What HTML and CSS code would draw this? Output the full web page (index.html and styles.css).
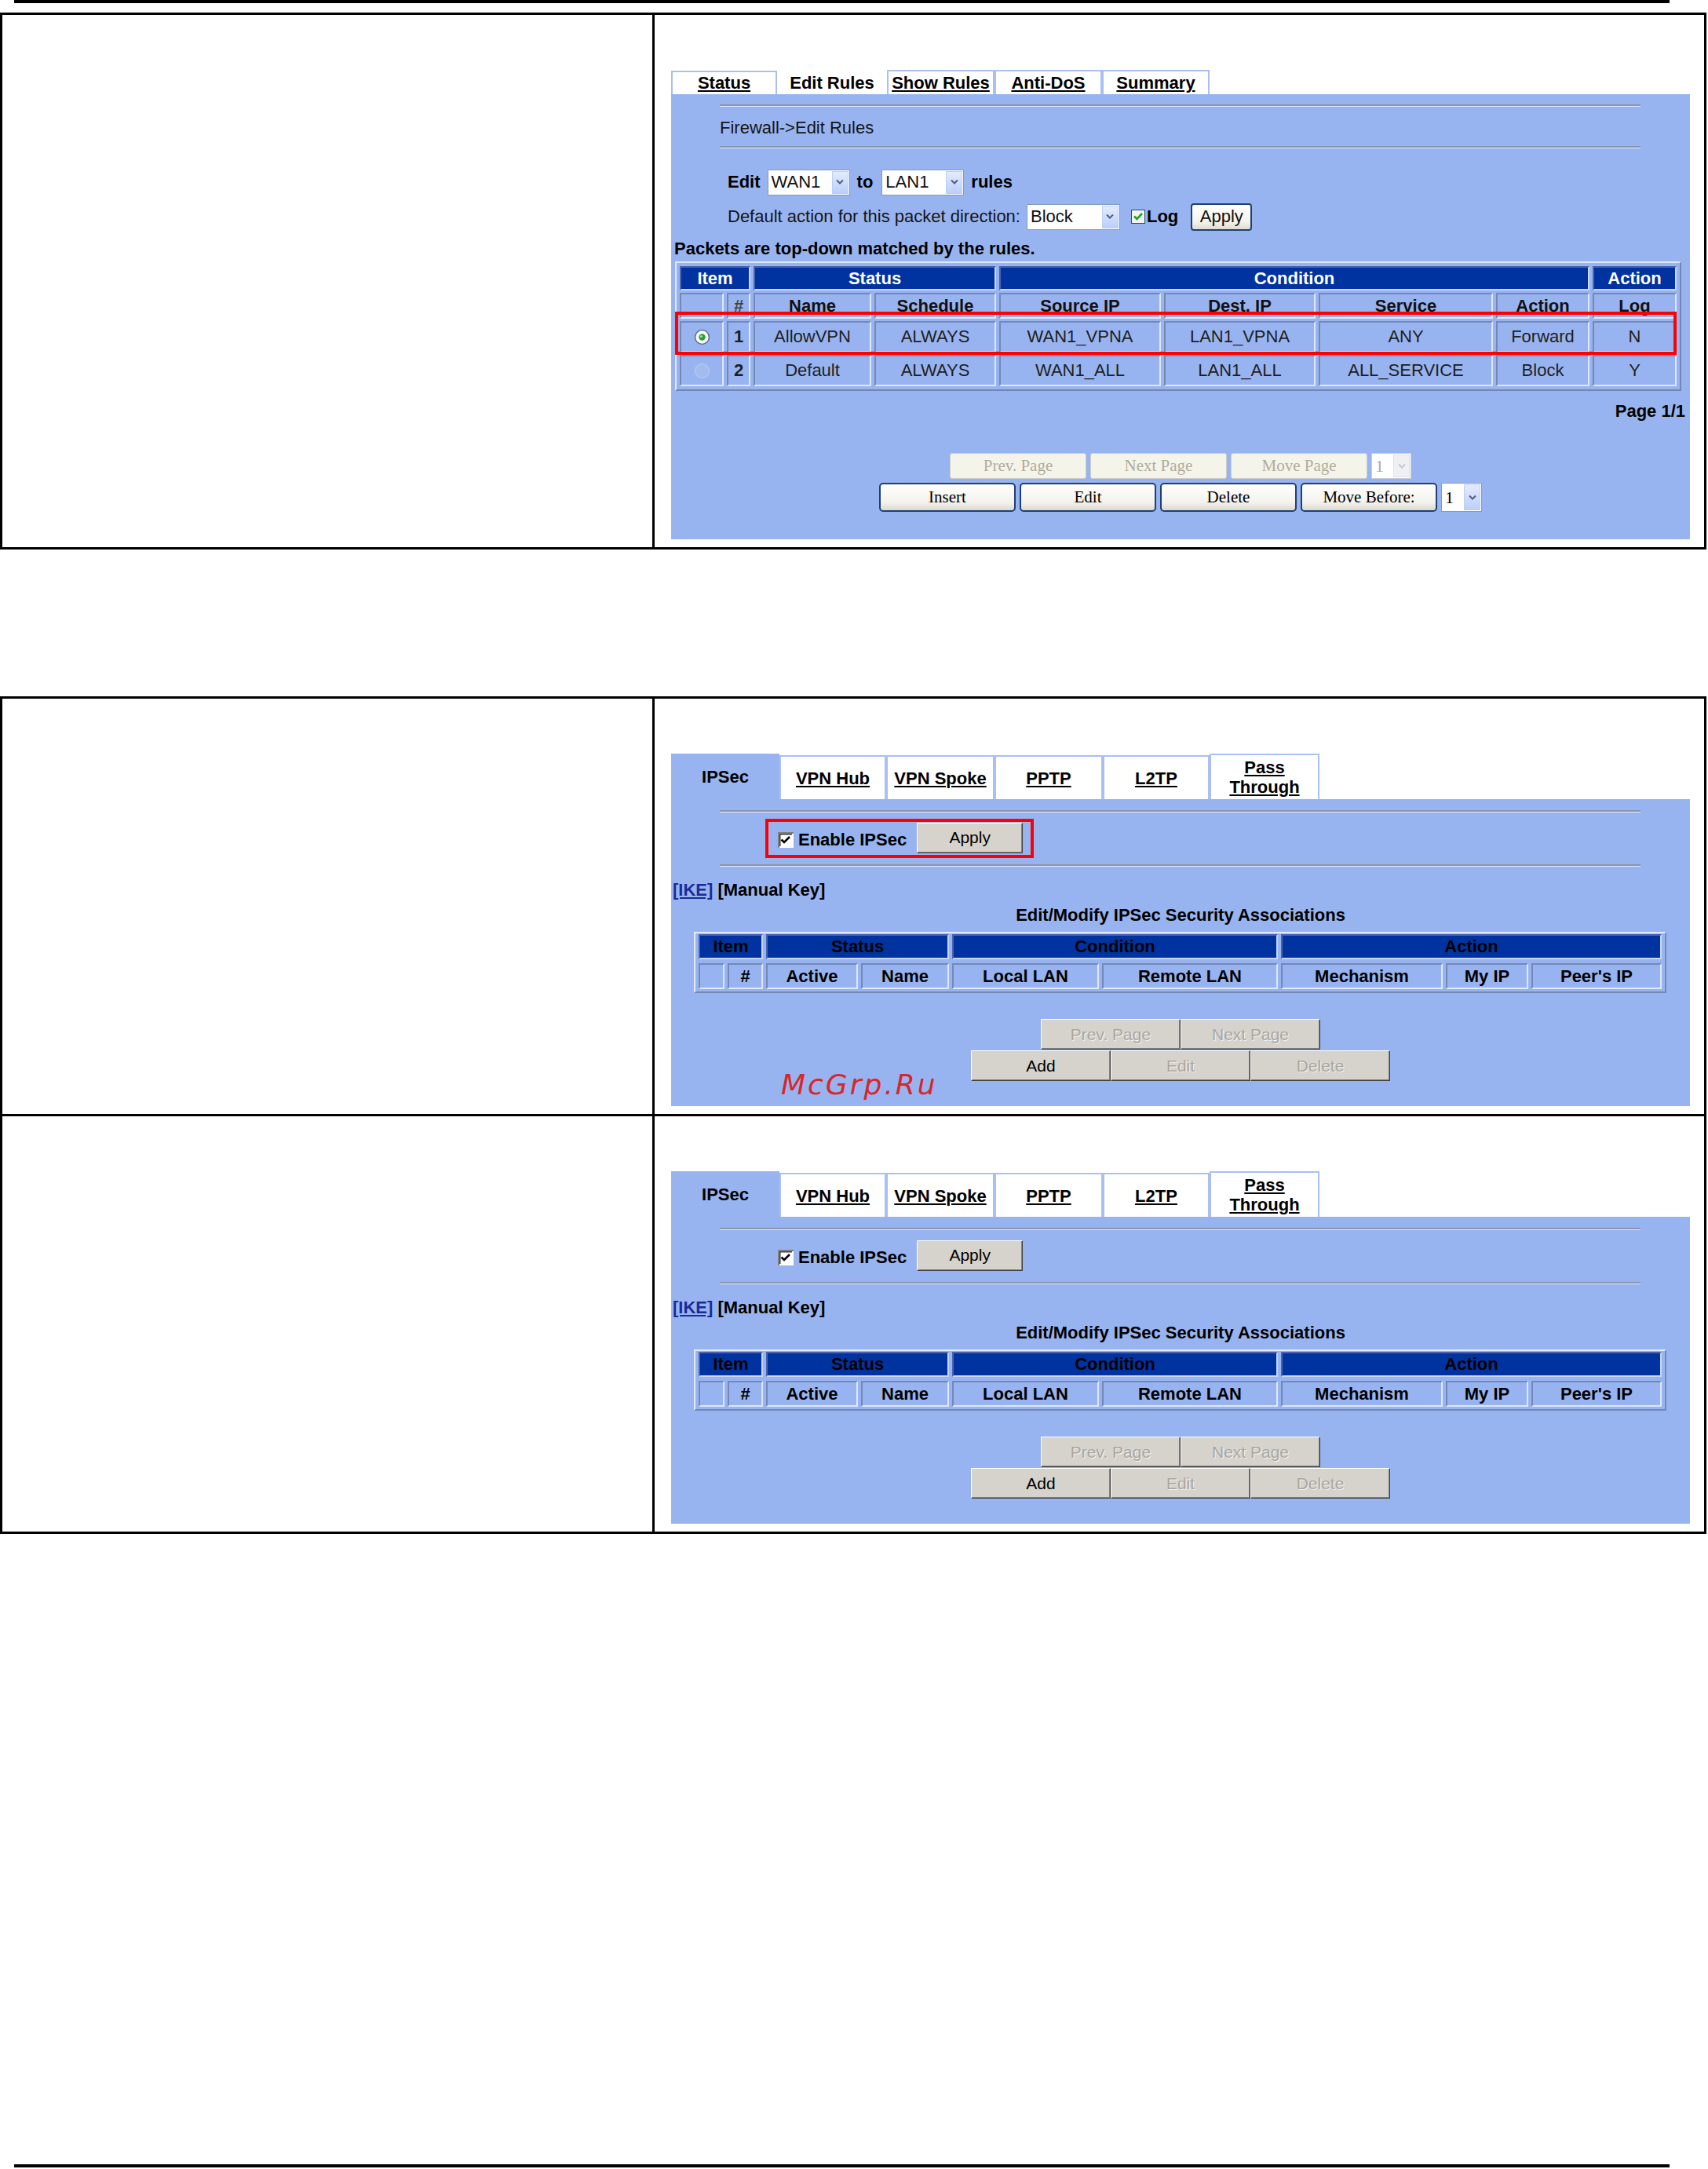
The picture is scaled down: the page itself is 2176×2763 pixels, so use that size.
FILE: index.html
```html
<!DOCTYPE html>
<html>
<head>
<meta charset="utf-8">
<title>Firewall / IPSec</title>
<link rel="stylesheet" href="styles.css">
</head>
<body>
<div class="rule"></div>

<div class="box box1">
  <div class="lcell"></div>
  <div class="rcell">
    <div class="fw">
      <div class="fw-tabs">
        <span class="fw-tab">Status</span>
        <span class="fw-tab active">Edit Rules</span>
        <span class="fw-tab">Show Rules</span>
        <span class="fw-tab">Anti-DoS</span>
        <span class="fw-tab">Summary</span>
      </div>
      <div class="fw-body">
        <div class="hr"></div>
        <div class="crumb">Firewall-&gt;Edit Rules</div>
        <div class="hr hr2"></div>
        <div class="edit-row">
          <b>Edit</b>
          <span class="xsel w105"><span class="val">WAN1</span><span class="arr"><svg width="12" height="10" viewBox="0 0 12 10"><path d="M2 2.5 L6 6.5 L10 2.5" fill="none" stroke="#4d6185" stroke-width="2"/></svg></span></span>
          <b>to</b>
          <span class="xsel w105 gap11"><span class="val">LAN1</span><span class="arr"><svg width="12" height="10" viewBox="0 0 12 10"><path d="M2 2.5 L6 6.5 L10 2.5" fill="none" stroke="#4d6185" stroke-width="2"/></svg></span></span>
          <b>rules</b>
        </div>
        <div class="def-row">
          <span>Default action for this packet direction:</span>
          <span class="xsel w119"><span class="val">Block</span><span class="arr"><svg width="12" height="10" viewBox="0 0 12 10"><path d="M2 2.5 L6 6.5 L10 2.5" fill="none" stroke="#4d6185" stroke-width="2"/></svg></span></span>
          <span class="xchk"><svg width="18" height="18" viewBox="0 0 18 18"><rect x="0.5" y="0.5" width="17" height="17" fill="#f4f4ee" stroke="#1c5180"/><path d="M4 8.5 L7.5 12 L14 5" fill="none" stroke="#21a121" stroke-width="2.6"/></svg></span>
          <b class="log">Log</b>
          <span class="xapply">Apply</span>
        </div>
        <div class="packets">Packets are top-down matched by the rules.</div>
        <div class="fwt">
          <div class="c h s2">Item</div>
          <div class="c h s2">Status</div>
          <div class="c h s4">Condition</div>
          <div class="c h">Action</div>

          <div class="c sh"></div>
          <div class="c sh hash">#</div>
          <div class="c sh">Name</div>
          <div class="c sh">Schedule</div>
          <div class="c sh">Source IP</div>
          <div class="c sh">Dest. IP</div>
          <div class="c sh">Service</div>
          <div class="c sh">Action</div>
          <div class="c sh">Log</div>

          <div class="c"><svg width="21" height="21" viewBox="0 0 20 20"><circle cx="10" cy="10" r="8.5" fill="#fbfbf7" stroke="#5a7290" stroke-width="1.5"/><circle cx="10" cy="10" r="4" fill="#2a9e3a"/><circle cx="9" cy="9" r="1.5" fill="#9fe0a5"/></svg></div>
          <div class="c num">1</div>
          <div class="c">AllowVPN</div>
          <div class="c">ALWAYS</div>
          <div class="c">WAN1_VPNA</div>
          <div class="c">LAN1_VPNA</div>
          <div class="c">ANY</div>
          <div class="c">Forward</div>
          <div class="c">N</div>

          <div class="c"><svg width="21" height="21" viewBox="0 0 20 20"><circle cx="10" cy="10" r="8.5" fill="#a3bcf0" stroke="#b4c6ee" stroke-width="1.5"/></svg></div>
          <div class="c num">2</div>
          <div class="c">Default</div>
          <div class="c">ALWAYS</div>
          <div class="c">WAN1_ALL</div>
          <div class="c">LAN1_ALL</div>
          <div class="c">ALL_SERVICE</div>
          <div class="c">Block</div>
          <div class="c">Y</div>

          <div class="redbox"></div>
        </div>
        <div class="pageinfo">Page 1/1</div>
        <div class="xrow r1">
          <span class="xbtn dis">Prev. Page</span>
          <span class="xbtn dis">Next Page</span>
          <span class="xbtn dis">Move Page</span>
          <span class="psel dis"><span class="val">1</span><span class="arr"><svg width="12" height="10" viewBox="0 0 12 10"><path d="M2 2.5 L6 6.5 L10 2.5" fill="none" stroke="#c3c8d4" stroke-width="2"/></svg></span></span>
        </div>
        <div class="xrow r2">
          <span class="xbtn">Insert</span>
          <span class="xbtn">Edit</span>
          <span class="xbtn">Delete</span>
          <span class="xbtn">Move Before:</span>
          <span class="psel"><span class="val">1</span><span class="arr"><svg width="12" height="10" viewBox="0 0 12 10"><path d="M2 2.5 L6 6.5 L10 2.5" fill="none" stroke="#4d6185" stroke-width="2"/></svg></span></span>
        </div>
      </div>
    </div>
  </div>
</div>

<div class="box box2">
  <div class="lcell sep"></div>
  <div class="rcell sep">
    <div class="ip">
      <div class="ip-tabs">
        <span class="ip-tab active w138">IPSec</span>
        <span class="ip-tab w136">VPN Hub</span>
        <span class="ip-tab w138">VPN Spoke</span>
        <span class="ip-tab w138">PPTP</span>
        <span class="ip-tab w136">L2TP</span>
        <span class="ip-tab w140 pass">Pass<br>Through</span>
      </div>
      <div class="ip-body">
        <div class="hr"></div>
        <div class="enable marked">
          <span class="cchk"><svg width="20" height="20" viewBox="0 0 20 20"><rect x="0" y="0" width="20" height="20" fill="#fff"/><path d="M0 0 H20 V2 H2 V20 H0 Z" fill="#808080"/><path d="M2 2 H18 V3.5 H3.5 V18 H2 Z" fill="#404040"/><path d="M4.5 9.5 L8 13 L15 6" fill="none" stroke="#000" stroke-width="2.6"/></svg></span>
          <b class="en-label">Enable IPSec</b>
          <span class="cbtn apply">Apply</span>
        </div>
        <div class="hr hr2b"></div>
        <div class="ike"><span class="lnk">[IKE]</span> [Manual Key]</div>
        <div class="sa-title">Edit/Modify IPSec Security Associations</div>
        <div class="ipt">
          <div class="c h s2">Item</div>
          <div class="c h s2">Status</div>
          <div class="c h s2">Condition</div>
          <div class="c h s3">Action</div>
          <div class="c sh"></div>
          <div class="c sh">#</div>
          <div class="c sh">Active</div>
          <div class="c sh">Name</div>
          <div class="c sh">Local LAN</div>
          <div class="c sh">Remote LAN</div>
          <div class="c sh">Mechanism</div>
          <div class="c sh">My IP</div>
          <div class="c sh">Peer's IP</div>
        </div>
        <div class="crow first">
          <span class="cbtn dis">Prev. Page</span>
          <span class="cbtn dis">Next Page</span>
        </div>
        <div class="crow">
          <span class="cbtn">Add</span>
          <span class="cbtn dis">Edit</span>
          <span class="cbtn dis">Delete</span>
        </div>
        <div class="watermark">McGrp.Ru</div>
      </div>
    </div>
  </div>

  <div class="lcell"></div>
  <div class="rcell">
    <div class="ip">
      <div class="ip-tabs">
        <span class="ip-tab active w138">IPSec</span>
        <span class="ip-tab w136">VPN Hub</span>
        <span class="ip-tab w138">VPN Spoke</span>
        <span class="ip-tab w138">PPTP</span>
        <span class="ip-tab w136">L2TP</span>
        <span class="ip-tab w140 pass">Pass<br>Through</span>
      </div>
      <div class="ip-body">
        <div class="hr"></div>
        <div class="enable">
          <span class="cchk"><svg width="20" height="20" viewBox="0 0 20 20"><rect x="0" y="0" width="20" height="20" fill="#fff"/><path d="M0 0 H20 V2 H2 V20 H0 Z" fill="#808080"/><path d="M2 2 H18 V3.5 H3.5 V18 H2 Z" fill="#404040"/><path d="M4.5 9.5 L8 13 L15 6" fill="none" stroke="#000" stroke-width="2.6"/></svg></span>
          <b class="en-label">Enable IPSec</b>
          <span class="cbtn apply">Apply</span>
        </div>
        <div class="hr hr2b"></div>
        <div class="ike"><span class="lnk">[IKE]</span> [Manual Key]</div>
        <div class="sa-title">Edit/Modify IPSec Security Associations</div>
        <div class="ipt">
          <div class="c h s2">Item</div>
          <div class="c h s2">Status</div>
          <div class="c h s2">Condition</div>
          <div class="c h s3">Action</div>
          <div class="c sh"></div>
          <div class="c sh">#</div>
          <div class="c sh">Active</div>
          <div class="c sh">Name</div>
          <div class="c sh">Local LAN</div>
          <div class="c sh">Remote LAN</div>
          <div class="c sh">Mechanism</div>
          <div class="c sh">My IP</div>
          <div class="c sh">Peer's IP</div>
        </div>
        <div class="crow first">
          <span class="cbtn dis">Prev. Page</span>
          <span class="cbtn dis">Next Page</span>
        </div>
        <div class="crow">
          <span class="cbtn">Add</span>
          <span class="cbtn dis">Edit</span>
          <span class="cbtn dis">Delete</span>
        </div>
      </div>
    </div>
  </div>
</div>

<div class="rule bottom"></div>
</body>
</html>
```
FILE: styles.css
```css
* { box-sizing: border-box; }
html, body { margin: 0; padding: 0; }
body {
  background: #fff;
  width: 2176px;
  height: 2763px;
  font-family: "Liberation Sans", Arial, sans-serif;
  font-size: 22px;
  color: #000;
}

.rule { height: 4px; width: 2109px; margin-left: 18px; background: #000; }
.rule.bottom { margin-top: 803px; }

.box {
  width: 2174px;
  border: 3px solid #000;
  display: grid;
  grid-template-columns: 831px 1337px;
}
.box1 { margin-top: 12px; }
.box2 { margin-top: 187px; }
.lcell { border-right: 3px solid #000; }
.rcell { padding: 69px 18px 10px 21px; }
.box2 .rcell { padding-top: 70px; }
.sep { border-bottom: 3px solid #000; }

/* ---------- shared ---------- */
.hr {
  height: 3px;
  width: 1173px;
  margin-left: 62px;
  border-top: 2px solid #8a94ad;
  border-bottom: 1px solid #e4eafb;
}
.c {
  display: flex;
  align-items: center;
  justify-content: center;
  border: 2px solid;
  border-color: #7488b8 #dfe7fb #dfe7fb #7488b8;
  color: #1e1e1e;
  white-space: nowrap;
}
.c.h {
  background: #0033a0;
  color: #fff;
  font-weight: bold;
  border-color: #4a62b0 #c9d6f6 #c9d6f6 #4a62b0;
}
.c.sh { font-weight: bold; color: #111; }
.s2 { grid-column: span 2; }
.s3 { grid-column: span 3; }
.s4 { grid-column: span 4; }

/* ---------- firewall panel ---------- */
.fw { width: 1298px; }
.fw-tabs { display: flex; height: 32px; align-items: flex-end; }
.fw-tab {
  width: 137px;
  height: 31px;
  background: #fff;
  border: 2px solid #a9c0f2;
  border-bottom: none;
  display: flex;
  align-items: center;
  justify-content: center;
  font-weight: bold;
  text-decoration: underline;
}
.fw-tab:first-child { width: 135px; height: 30px; }
.fw-tab.active { width: 140px; border-color: transparent; text-decoration: none; }
.fw-body {
  background: #98b4f0;
  height: 567px;
  padding-top: 13px;
}
.crumb { margin-top: 14px; height: 26px; line-height: 26px; padding-left: 62px; color: #151515; }
.hr2 { margin-top: 10px; }

.edit-row {
  margin-top: 26px;
  height: 34px;
  padding-left: 72px;
  display: flex;
  align-items: center;
}
.xsel {
  height: 33px;
  background: #fff;
  border: 1px solid #7f9db9;
  display: flex;
  align-items: stretch;
  margin: 0 9px;
  color: #111;
}
.xsel .val { flex: 1; padding-left: 4px; display: flex; align-items: center; }
.xsel .arr, .psel .arr {
  width: 21px;
  margin: 1px;
  background: linear-gradient(#e3ebfe, #bccff9);
  border: 1px solid #bdcff5;
  display: flex;
  align-items: center;
  justify-content: center;
}
.w105 { width: 105px; }
.w119 { width: 119px; }
.gap11 { margin-left: 11px; }

.def-row {
  margin-top: 10px;
  height: 34px;
  padding-left: 72px;
  display: flex;
  align-items: center;
  color: #151515;
}
.def-row .xsel { margin: 0 0 0 8px; }
.xchk { margin-left: 14px; display: flex; }
.log { margin-left: 2px; color: #000; }
.xapply {
  margin-left: 16px;
  width: 78px;
  height: 35px;
  border: 2px solid #1f3f73;
  border-radius: 4px;
  background: linear-gradient(#ffffff, #f3f2ec 70%, #dedbd0);
  display: flex;
  align-items: center;
  justify-content: center;
  font-size: 22px;
  color: #111;
}
.packets { margin-top: 11px; height: 26px; line-height: 26px; padding-left: 4px; font-weight: bold; }

.fwt {
  position: relative;
  margin-top: 3px;
  margin-left: 5px;
  width: 1282px;
  display: grid;
  grid-template-columns: 56px 30px 150px 155px 206px 193px 222px 119px 107px;
  grid-template-rows: 31px 33px 40px 40px;
  column-gap: 4px;
  row-gap: 3px;
  padding: 4px;
  border: 2px solid;
  border-color: #dfe7fb #7185b6 #7185b6 #dfe7fb;
}
.fwt .hash { color: #444; }
.c.num { font-weight: bold; }
.redbox {
  position: absolute;
  left: -2px;
  top: 62px;
  width: 1276px;
  height: 55px;
  border: 4px solid #ff0000;
}
.pageinfo {
  margin-top: 13px;
  height: 26px;
  line-height: 26px;
  text-align: right;
  padding-right: 6px;
  font-weight: bold;
}

.xrow { display: flex; justify-content: center; gap: 5px; }
.xrow.r1 { margin-top: 40px; height: 33px; }
.xrow.r2 { margin-top: 5px; height: 37px; }
.xbtn {
  width: 174px;
  display: flex;
  align-items: center;
  justify-content: center;
  font-family: "Liberation Serif", "Times New Roman", serif;
  font-size: 21px;
  color: #000;
  border: 2px solid #1f3f73;
  border-radius: 5px;
  background: linear-gradient(#ffffff, #f3f2ec 70%, #dcd9ce);
}
.xbtn.dis {
  border: 1px solid #d0cec2;
  border-radius: 3px;
  background: #f5f4ea;
  color: #b0ac9c;
}
.psel {
  width: 52px;
  background: #fff;
  border: 1px solid #7f9db9;
  display: flex;
  font-family: "Liberation Serif", "Times New Roman", serif;
  font-size: 22px;
}
.psel .val { flex: 1; padding-left: 4px; display: flex; align-items: center; }
.psel.dis { width: 51px; border-color: #c9ccd6; color: #a8a8a8; }
.psel.dis .arr { background: #eef0f4; border-color: #dfe2e8; }

/* ---------- IPSec panel ---------- */
.ip { width: 1298px; }
.ip-tabs { display: flex; height: 58px; }
.ip-tab {
  margin-top: 2px;
  background: #fff;
  border: 2px solid #a9c0f2;
  border-bottom: none;
  display: flex;
  align-items: center;
  justify-content: center;
  text-align: center;
  font-weight: bold;
  text-decoration: underline;
  line-height: 25px;
}
.ip-tab.active { margin-top: 0; background: #98b4f0; border: none; text-decoration: none; }
.ip-tab.pass { margin-top: 0; }
.w136 { width: 136px; }
.w138 { width: 138px; }
.w140 { width: 140px; }
.ip-body {
  position: relative;
  background: #98b4f0;
  height: 391px;
  padding-top: 14px;
}
.enable {
  margin-top: 8px;
  margin-left: 120px;
  width: 342px;
  height: 50px;
  border: 4px solid transparent;
  display: flex;
  align-items: center;
  padding-left: 12px;
  padding-top: 3px;
}
.enable.marked { border-color: #ff0000; }
.cchk { display: flex; }
.en-label { margin-left: 6px; }
.cbtn {
  width: 178px;
  display: flex;
  align-items: center;
  justify-content: center;
  font-size: 21px;
  color: #000;
  background: #d6d3cc;
  border: 1px solid;
  border-color: #ffffff #404040 #404040 #ffffff;
  box-shadow: inset -1px -1px 0 #808080;
}
.cbtn.dis { color: #a8a6a0; text-shadow: 1px 1px 0 #f4f4f4; }
.cbtn.apply { width: 135px; height: 39px; margin-left: 13px; margin-top: -5px; }
.hr2b { margin-top: 8px; }
.ike { margin-top: 17px; height: 26px; line-height: 26px; padding-left: 2px; font-weight: bold; }
.lnk { color: #1a2a9a; text-decoration: underline; }
.sa-title { margin-top: 6px; height: 26px; line-height: 26px; text-align: center; font-weight: bold; }
.ipt {
  margin-top: 8px;
  margin-left: 29px;
  width: 1239px;
  display: grid;
  grid-template-columns: 33px 45px 117px 112px 187px 224px 206px 105px 166px;
  grid-template-rows: 32px 33px;
  column-gap: 4px;
  row-gap: 5px;
  padding: 1px 4px 3px 4px;
  border: 2px solid;
  border-color: #e2e9fb #7488b8 #7488b8 #e2e9fb;
}
.ipt .c { color: #000; }
.crow { display: flex; justify-content: center; height: 39px; margin-top: 1px; }
.crow.first { margin-top: 33px; }
.watermark {
  position: absolute;
  left: 140px;
  top: 343px;
  height: 42px;
  line-height: 42px;
  font-family: "DejaVu Sans", Verdana, sans-serif;
  font-style: italic;
  font-size: 36px;
  letter-spacing: 3px;
  color: #d8262a;
}
```
